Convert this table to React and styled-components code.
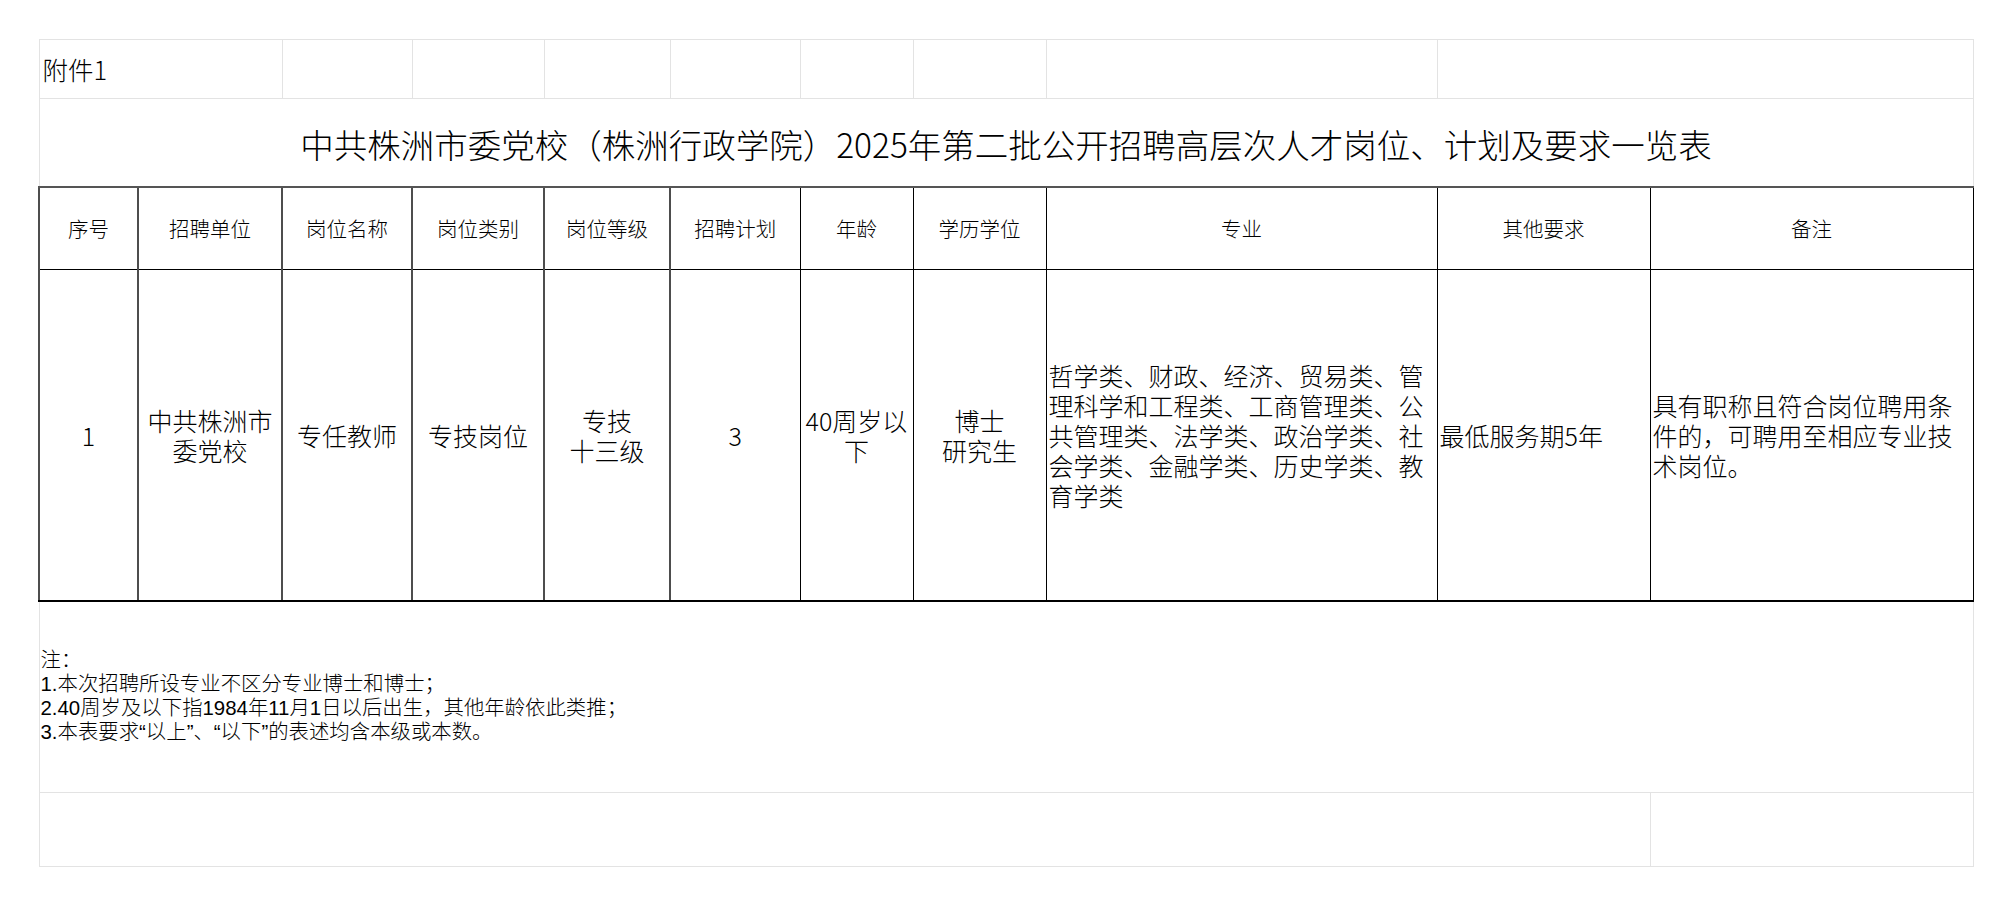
import React from "react"
import styled, { createGlobalStyle } from "styled-components"

const GlobalStyle = createGlobalStyle`
  * {
    box-sizing: border-box;
  }

  html,
  body {
    margin: 0;
    background: #fff;
    color: #000;
    font-family: "Noto Sans CJK SC", "Noto Sans", sans-serif;
    font-weight: 300;
  }
`

const Page = styled.main`
  padding: 39px 0 0 38px;
  width: 2013px;
  height: 906px;
  overflow: hidden;
`

const Sheet = styled.table`
  border-collapse: collapse;
  table-layout: fixed;
  width: 1934px;
`

const Row = styled.tr`
  height: ${(p) => p.$h}px;
`

// faint gridlines of the sheet, outside the printed table
const GridCell = styled.td`
  border: 1px solid #e3e3e3;
  padding: 0 3px;
  font-size: ${(p) => p.$size || 20}px;
  line-height: 1.2;
  vertical-align: middle;
  text-align: ${(p) => p.$align || "left"};
`

const TitleCell = styled(GridCell)`
  font-size: 33.5px;
  text-align: center;
  padding-top: 4px;
`

// latin first so the quote marks stay narrow, CJK falls through
const NoteCell = styled(GridCell)`
  font-family: "Liberation Sans", "Noto Sans CJK SC", sans-serif;
  font-size: 20.4px;
  line-height: 23.8px;
  padding: 0 1px;
  white-space: pre-line;
`

const HeadCell = styled.th`
  font-weight: 300;
  font-size: 20.5px;
  line-height: 1.2;
  text-align: center;
  vertical-align: middle;
  padding: 0 2px;
  border: 1px solid #000;
  border-top: 2px solid #555;
  border-left: ${(p) => (p.$heavy ? "2px solid #4d4d4d" : "1px solid #000")};
`

const DataCell = styled.td`
  font-size: 25px;
  line-height: 30px;
  text-align: ${(p) => p.$align || "center"};
  vertical-align: middle;
  padding: 0 2px;
  border: 1px solid #000;
  border-bottom: 2px solid #000;
  border-left: ${(p) => (p.$heavy ? "2px solid #4d4d4d" : "1px solid #000")};
`

const Lines = styled.span`
  white-space: pre-line;
`

const widths = [99, 144, 130, 132, 126, 130, 113, 133, 391, 213, 323]

const columns = [
  { head: "序号", value: "1" },
  { head: "招聘单位", value: "中共株洲市委党校" },
  { head: "岗位名称", value: "专任教师" },
  { head: "岗位类别", value: "专技岗位" },
  { head: "岗位等级", value: "专技\n十三级", pre: true },
  { head: "招聘计划", value: "3" },
  { head: "年龄", value: "40周岁以下" },
  { head: "学历学位", value: "博士\n研究生", pre: true },
  {
    head: "专业",
    value:
      "哲学类、财政、经济、贸易类、管理科学和工程类、工商管理类、公共管理类、法学类、政治学类、社会学类、金融学类、历史学类、教育学类",
    align: "left",
  },
  { head: "其他要求", value: "最低服务期5年", align: "left" },
  {
    head: "备注",
    value: "具有职称且符合岗位聘用条件的，可聘用至相应专业技术岗位。",
    align: "left",
  },
]

const notes = `注：
1.本次招聘所设专业不区分专业博士和博士；
2.40周岁及以下指1984年11月1日以后出生，其他年龄依此类推；
3.本表要求“以上”、“以下”的表述均含本级或本数。`

const App = () => {
  return (
    <>
      <GlobalStyle />
      <Page>
        <Sheet>
          <colgroup>
            {widths.map((w, i) => (
              <col key={i} style={{ width: w }} />
            ))}
          </colgroup>
          <tbody>
            <Row $h={59}>
              <GridCell colSpan={2} $size={25.5}>
                附件1
              </GridCell>
              {[3, 4, 5, 6, 7, 8, 9].map((n) => (
                <GridCell key={n} />
              ))}
              <GridCell colSpan={2} />
            </Row>
            <Row $h={88}>
              <TitleCell colSpan={11}>
                中共株洲市委党校（株洲行政学院）2025年第二批公开招聘高层次人才岗位、计划及要求一览表
              </TitleCell>
            </Row>
            <Row $h={83}>
              {columns.map((c, i) => (
                <HeadCell key={c.head} $heavy={i < 6}>
                  {c.head}
                </HeadCell>
              ))}
            </Row>
            <Row $h={331}>
              {columns.map((c, i) => (
                <DataCell key={c.head} $heavy={i < 6} $align={c.align}>
                  {c.pre ? <Lines>{c.value}</Lines> : c.value}
                </DataCell>
              ))}
            </Row>
            <Row $h={192}>
              <NoteCell colSpan={11}>{notes}</NoteCell>
            </Row>
            <Row $h={74}>
              <GridCell colSpan={10} />
              <GridCell />
            </Row>
          </tbody>
        </Sheet>
      </Page>
    </>
  )
}

export default App
